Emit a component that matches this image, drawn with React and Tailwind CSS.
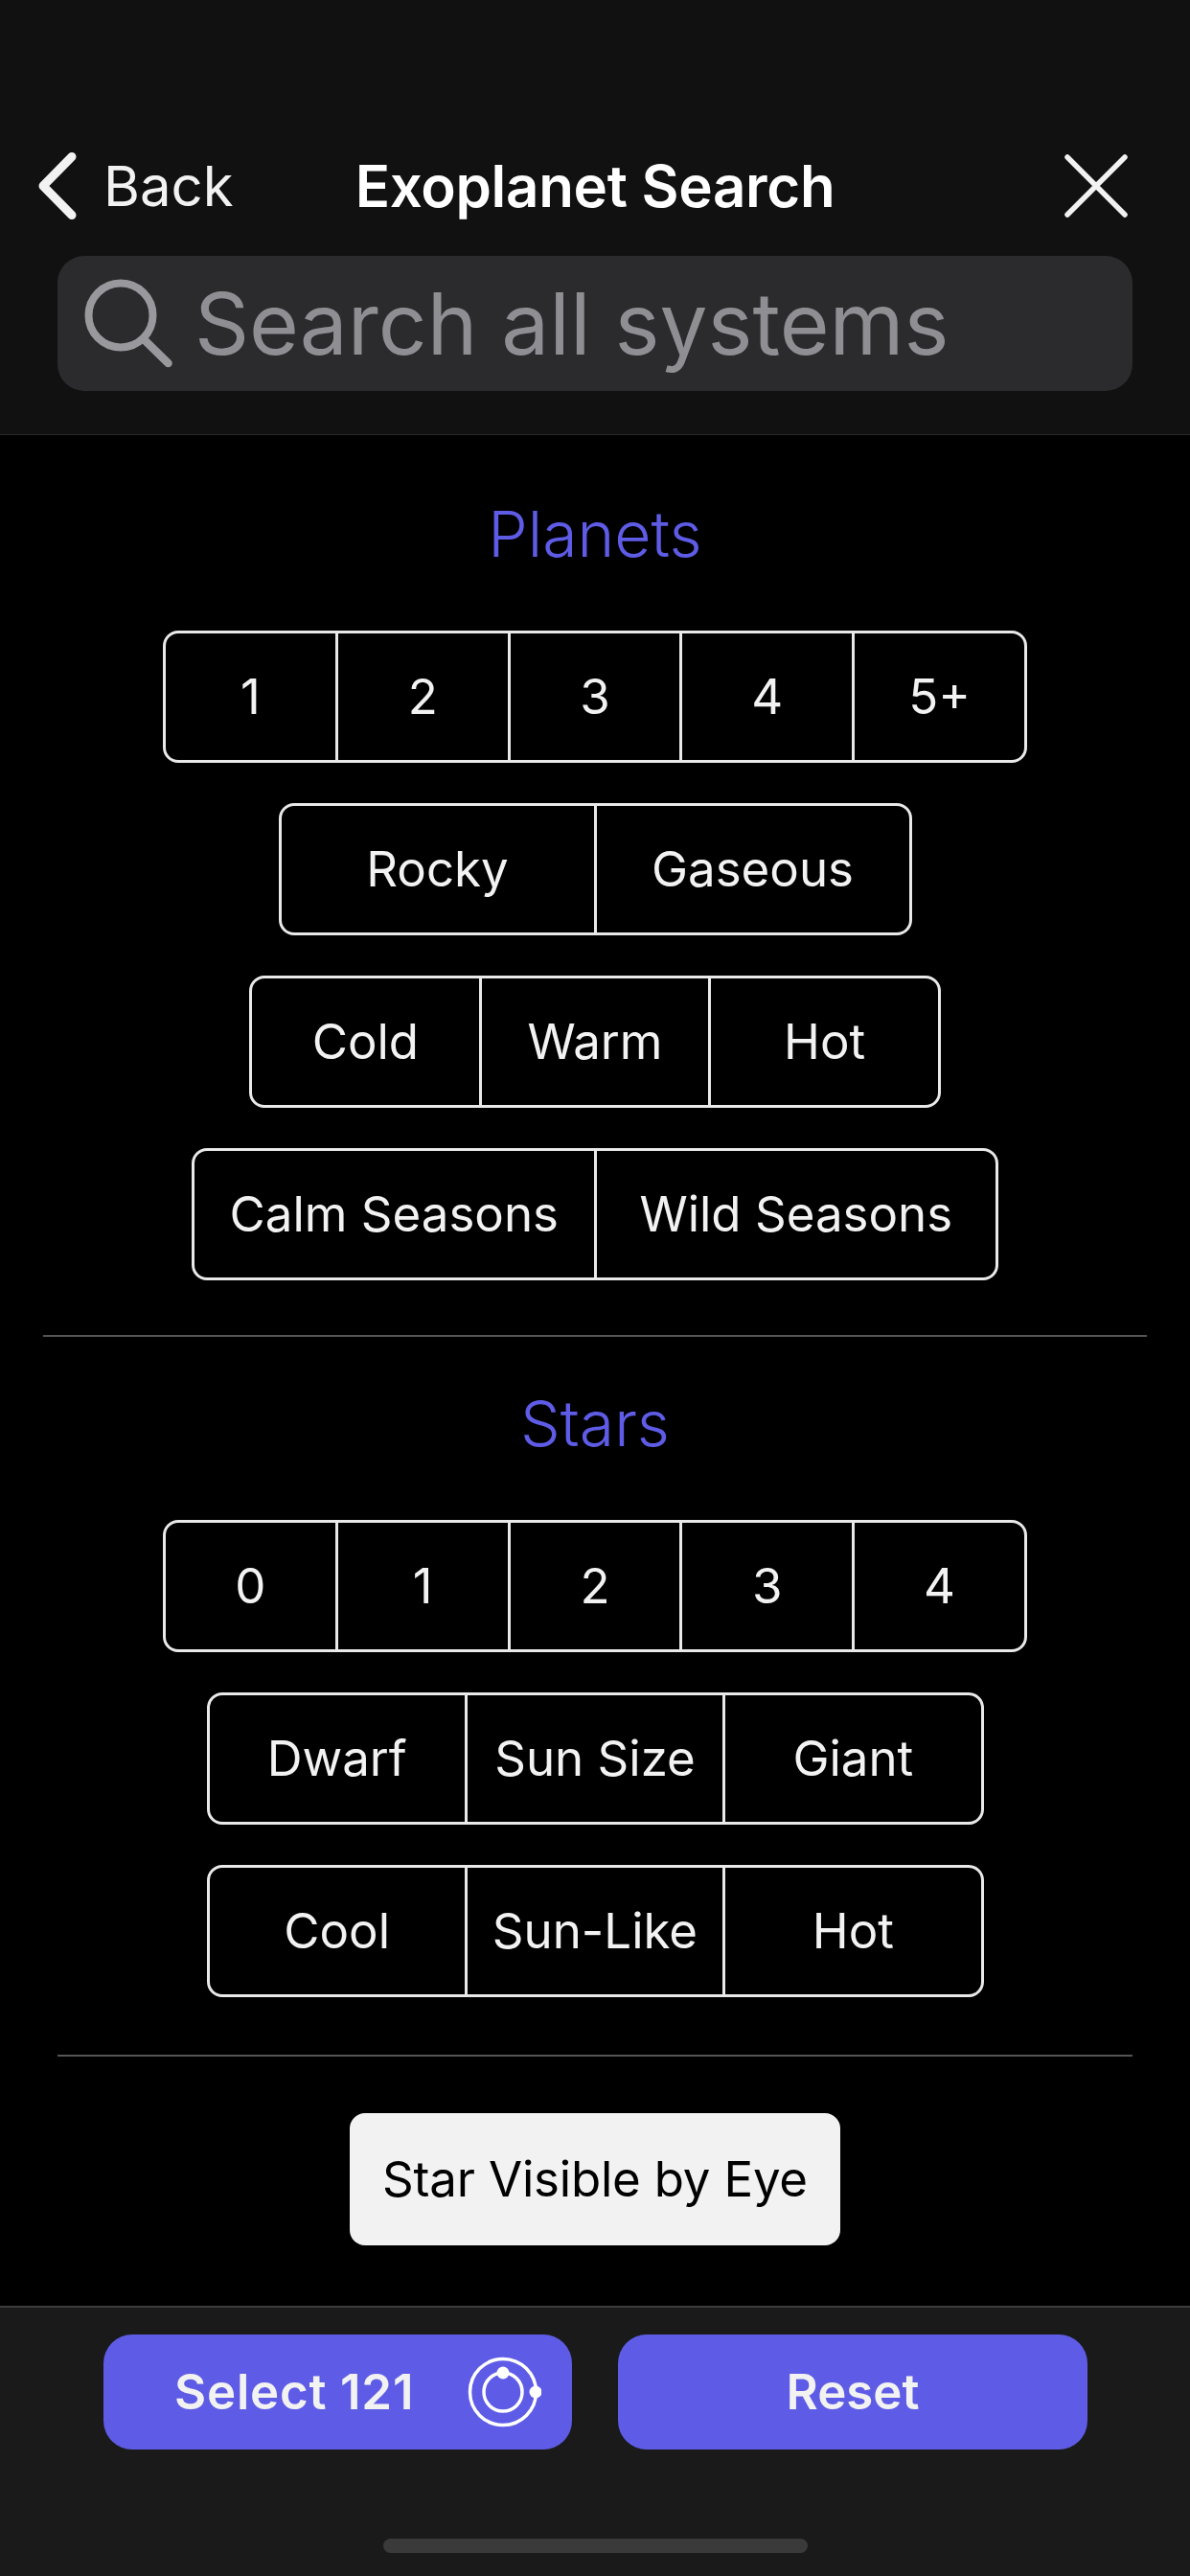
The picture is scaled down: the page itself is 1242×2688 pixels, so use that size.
import React from 'react';

const Segment = ({ items, width }) => (
  <div className={`flex h-[138px] ${width} mx-auto rounded-[16px] border-[3px] border-[#e9e9e9] overflow-hidden`}>
    {items.map((item, i) => (
      <div
        key={item}
        className={`flex-1 flex items-center justify-center text-[51px] text-[#f2f2f2] whitespace-nowrap ${i > 0 ? 'border-l-[3px] border-[#e9e9e9]' : ''}`}
      >
        {item}
      </div>
    ))}
  </div>
);

const SectionTitle = ({ children }) => (
  <h2 className="h-[90px] mb-[56px] flex items-center justify-center text-[66px] font-light text-[#5e5ce6]">
    {children}
  </h2>
);

const OrbitIcon = () => (
  <svg width="80" height="80" viewBox="0 0 80 80" fill="none" className="shrink-0">
    <circle cx="40" cy="40" r="34.5" stroke="white" strokeWidth="3.5" />
    <circle cx="40" cy="40" r="20" stroke="white" strokeWidth="3.5" />
    <circle cx="40" cy="20" r="6.5" fill="white" />
    <circle cx="74" cy="40" r="6.5" fill="white" />
  </svg>
);

export default function App() {
  return (
    <div className="w-[1242px] h-[2688px] flex flex-col bg-black font-['Inter','Liberation_Sans',sans-serif]">
      {/* Header */}
      <header className="h-[454px] shrink-0 bg-[#111111] border-b border-[#2a2a2a] pt-[151px]">
        <div className="grid grid-cols-[1fr_auto_1fr] items-center h-[86px] px-[37px]">
          <div className="flex items-center gap-[23px] text-[#f2f2f2]">
            <svg width="48" height="76" viewBox="0 0 48 76" fill="none">
              <path d="M38 7.5 L8 38 L38 68.5" stroke="#f2f2f2" strokeWidth="9" strokeLinecap="round" strokeLinejoin="round" />
            </svg>
            <span className="text-[58px] leading-none">Back</span>
          </div>
          <h1 className="text-[60px] leading-none font-semibold text-white tracking-[-0.3px]">Exoplanet Search</h1>
          <div className="flex justify-end pr-[27px]">
            <svg width="68" height="68" viewBox="0 0 68 68" fill="none">
              <path d="M4 4 L64 64 M64 4 L4 64" stroke="#f2f2f2" strokeWidth="5.5" strokeLinecap="round" />
            </svg>
          </div>
        </div>
        <div className="mx-[60px] mt-[30px] h-[141px] rounded-[28px] bg-[#2b2b2e] flex items-center gap-[18px] pl-[25px]">
          <svg width="100" height="100" viewBox="0 0 100 100" fill="none" className="shrink-0">
            <circle cx="41" cy="41" r="33.5" stroke="#98989d" strokeWidth="8" />
            <path d="M66 67 L90.5 91" stroke="#98989d" strokeWidth="8.5" strokeLinecap="round" />
          </svg>
          <span className="text-[89px] leading-none text-[#8e8e93] whitespace-nowrap">Search all systems</span>
        </div>
      </header>

      {/* Filters */}
      <main className="flex-1 pt-[58px]">
        <SectionTitle>Planets</SectionTitle>
        <div className="flex flex-col gap-[42px]">
          <Segment width="w-[902px]" items={['1', '2', '3', '4', '5+']} />
          <Segment width="w-[661px]" items={['Rocky', 'Gaseous']} />
          <Segment width="w-[722px]" items={['Cold', 'Warm', 'Hot']} />
          <Segment width="w-[842px]" items={['Calm Seasons', 'Wild Seasons']} />
        </div>
        <div className="h-[2px] mx-[45px] mt-[57px] mb-[45px] bg-[#555555]" />
        <SectionTitle>Stars</SectionTitle>
        <div className="flex flex-col gap-[42px]">
          <Segment width="w-[902px]" items={['0', '1', '2', '3', '4']} />
          <Segment width="w-[811px]" items={['Dwarf', 'Sun Size', 'Giant']} />
          <Segment width="w-[811px]" items={['Cool', 'Sun-Like', 'Hot']} />
        </div>
        <div className="h-[2px] mx-[60px] mt-[60px] mb-[59px] bg-[#555555]" />
        <div className="w-[512px] h-[138px] mx-auto rounded-[16px] bg-[#f2f2f2] flex items-center justify-center text-[51px] tracking-[-0.2px] text-black whitespace-nowrap">
          Star Visible by Eye
        </div>
      </main>

      {/* Footer */}
      <footer className="h-[282px] shrink-0 bg-[#1a1a1a] border-t-2 border-[#3c3c3c] pt-[28px] flex flex-col">
        <div className="flex gap-[48px] pl-[108px]">
          <button className="w-[489px] h-[120px] rounded-[30px] bg-[#5e5ce6] flex items-center justify-between pl-[74px] pr-[32px] text-[51px] font-semibold text-[#f2f2f2]">
            <span className="tracking-[0.8px]">Select 121</span>
            <OrbitIcon />
          </button>
          <button className="w-[490px] h-[120px] rounded-[30px] bg-[#5e5ce6] flex items-center justify-center text-[51px] font-semibold text-[#f2f2f2]">
            Reset
          </button>
        </div>
        <div className="w-[443px] h-[15px] mx-auto mt-[93px] rounded-full bg-[#3a3a3a]" />
      </footer>
    </div>
  );
}
